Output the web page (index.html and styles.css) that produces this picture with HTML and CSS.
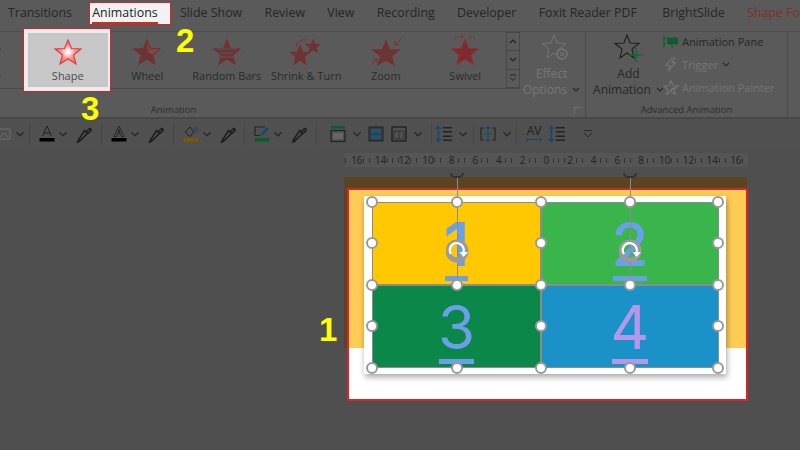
FILE: index.html
```html
<!DOCTYPE html>
<html lang="en">
<head>
    <meta charset="UTF-8">
    <title>Animations</title>
    <link rel="stylesheet" href="styles.css">
</head>
<body>
    <svg class="defs" width="0" height="0">
        <symbol id="star" viewBox="0 0 28 26"><polygon points="14,1 17.5,9.5 27,10 19.5,16 22,25 14,20 6,25 8.5,16 1,10 10.5,9.5"/></symbol>
        <symbol id="dropper" viewBox="0 0 16 16"><path d="M3 13.5 L2.5 15 L4 14.5 L11 7.5 L8.5 5 Z M8 4.5 L11.5 8 M10 6 L12.5 3.5 C13.5 2.5 15 4 14 5 L11.5 7.5" fill="none" stroke="#1c1c1c" stroke-width="1.4"/></symbol>
        <symbol id="caret" viewBox="0 0 8 5"><path d="M1 1 L4 4 L7 1" fill="none" stroke="#2a2a2a" stroke-width="1.1"/></symbol>
        <symbol id="lines" viewBox="0 0 16 16"><path d="M7 2.5H15M7 6H15M7 10H15M7 13.5H15" stroke="#222" stroke-width="1.3"/><path d="M3 1V15M1 3.5L3 1.2L5 3.5M1 12.5L3 14.8L5 12.5" fill="none" stroke="#144a70" stroke-width="1.4"/></symbol>
    </svg>

    <nav class="tabs">
        <span>Transitions</span>
        <span class="tab-active">Animations</span>
        <span>Slide Show</span>
        <span>Review</span>
        <span>View</span>
        <span>Recording</span>
        <span>Developer</span>
        <span class="tab-foxit">Foxit Reader PDF</span>
        <span>BrightSlide</span>
        <span class="tab-format">Shape Format</span>
    </nav>

    <section class="ribbon">
        <div class="group group-animation">
            <div class="group-body">
                <div class="gallery">
                    <div class="anim"><svg class="star dark"><use href="#star"/></svg><span>Fade</span></div>
                    <div class="anim anim-picked">
                        <svg class="star" viewBox="0 0 28 26">
                            <defs><radialGradient id="glow"><stop offset="0.1" stop-color="#fff"/><stop offset="0.55" stop-color="#ff8f8f"/><stop offset="1" stop-color="#f9686c"/></radialGradient></defs>
                            <polygon points="14,1 17.5,9.5 27,10 19.5,16 22,25 14,20 6,25 8.5,16 1,10 10.5,9.5" fill="url(#glow)" stroke="#d9403f" stroke-width="1.2"/>
                        </svg>
                        <span>Shape</span>
                    </div>
                    <div class="anim">
                        <svg class="star" viewBox="0 0 28 26"><polygon class="st" points="14,1 17.5,9.5 27,10 19.5,16 22,25 14,20 6,25 8.5,16 1,10 10.5,9.5"/><polygon points="14,13 17.5,9.5 27,10 19.5,16 14,13 14,1 17.5,9.5" fill="#7d4a4a"/></svg>
                        <span>Wheel</span>
                    </div>
                    <div class="anim">
                        <svg class="star" viewBox="0 0 28 26"><polygon class="st" points="14,1 17.5,9.5 27,10 19.5,16 22,25 14,20 6,25 8.5,16 1,10 10.5,9.5"/><path d="M4 10H24M8 14H20M7 18H21" stroke="#595959" stroke-width="1"/></svg>
                        <span>Random Bars</span>
                    </div>
                    <div class="anim">
                        <svg class="star star-wide" viewBox="0 0 34 28"><polygon class="st" points="11,8 13.5,14 20,14.5 15,18.5 17,26 11,22 5,26 7,18.5 2,14.5 8.5,14"/><polygon class="st" points="24,2 25.5,6 30.5,6.5 27,9.5 28.5,14 24,11.5 20,14 21,9.5 17.5,6.5 22.5,6"/><path d="M7 9C8 4 12 1 17 2" fill="none" stroke="#7c2d2d" stroke-width="1"/></svg>
                        <span>Shrink &amp; Turn</span>
                    </div>
                    <div class="anim">
                        <svg class="star star-wide" viewBox="0 0 34 28"><polygon class="st" transform="translate(3,2)" points="14,1 17.5,9.5 27,10 19.5,16 22,25 14,20 6,25 8.5,16 1,10 10.5,9.5"/><path d="M32 1L26 7M26 3V7H30M2 27L8 21M8 25V21H4" fill="none" stroke="#7c2d2d" stroke-width="1"/></svg>
                        <span>Zoom</span>
                    </div>
                    <div class="anim">
                        <svg class="star star-tall" viewBox="0 0 28 32"><polygon class="st swivel" transform="translate(0,6)" points="14,1 17.5,9.5 27,10 19.5,16 22,25 14,20 6,25 8.5,16 1,10 10.5,9.5"/><path d="M5 7C3 3 10 2 12 5M12 1L11 6M18 6C19 2 25 3 23 6" fill="none" stroke="#8c2f2f" stroke-width="1"/></svg>
                        <span>Swivel</span>
                    </div>
                    <div class="scroller">
                        <div class="scroll-btn"><svg viewBox="0 0 8 5"><path d="M1 4L4 1L7 4" fill="none" stroke="#222" stroke-width="1.1"/></svg></div>
                        <div class="scroll-btn"><svg viewBox="0 0 8 5"><path d="M1 1L4 4L7 1" fill="none" stroke="#222" stroke-width="1.1"/></svg></div>
                        <div class="scroll-btn"><svg class="scroll-more" viewBox="0 0 8 8"><path d="M1 1H7M1 3.5L4 6.5L7 3.5" fill="none" stroke="#222" stroke-width="1"/></svg></div>
                    </div>
                </div>
                <div class="big-btn big-btn-off">
                    <svg class="big-icon" viewBox="0 0 30 28"><polygon points="13,1 16,9 25,9.5 18,15 20,24 13,19 6,24 8,15 1,9.5 10,9" fill="#595959" stroke="#757575" stroke-width="1"/><circle cx="21" cy="20" r="5" fill="#595959" stroke="#757575" stroke-width="1.6"/><circle cx="21" cy="20" r="1.8" fill="none" stroke="#757575"/></svg>
                    <span>Effect</span>
                    <span>Options <svg class="caret-inline"><use href="#caret"/></svg></span>
                </div>
            </div>
            <div class="group-label label-animation">Animation<span class="launcher"></span></div>
        </div>
        <div class="group group-advanced">
            <div class="group-body">
                <div class="big-btn">
                    <svg class="big-icon" viewBox="0 0 30 28"><polygon points="13,1 16,9 25,9.5 18,15 20,24 13,19 6,24 8,15 1,9.5 10,9" fill="none" stroke="#1e1e1e" stroke-width="1.1"/><path d="M22 14V28M15 21H29" stroke="#0f6b3a" stroke-width="1.6"/></svg>
                    <span>Add</span>
                    <span>Animation <svg class="caret-inline"><use href="#caret"/></svg></span>
                </div>
                <ul class="side-list">
                    <li><svg class="side-icon" viewBox="0 0 16 14"><path d="M4 3H15V10H4Z" fill="#0f5c34"/><path d="M1 1V13M1 4H3M1 9H3M9 10V13" stroke="#0f5c34" stroke-width="1.2" fill="none"/></svg>Animation Pane</li>
                    <li class="side-off"><svg class="side-icon" viewBox="0 0 16 16"><path d="M9 1L3 9H7L5 15L13 6H9L12 1Z" fill="none" stroke="#757575" stroke-width="1.2"/></svg>Trigger <svg class="caret-inline"><use href="#caret"/></svg></li>
                    <li class="side-off"><svg class="side-icon" viewBox="0 0 28 26"><polygon points="14,1 17.5,9.5 27,10 19.5,16 22,25 14,20 6,25 8.5,16 1,10 10.5,9.5" fill="none" stroke="#757575" stroke-width="2"/><path d="M12 19L22 12" stroke="#757575" stroke-width="3"/></svg>Animation Painter</li>
                </ul>
            </div>
            <div class="group-label">Advanced Animation</div>
        </div>
        <div class="group group-rest"></div>
    </section>

    <section class="toolbar">
        <div class="tb-group tb-first">
            <svg class="tool" viewBox="0 0 18 18"><rect x="3" y="4" width="12" height="10" fill="none" stroke="#6e6e6e"/><path d="M5 12L9 8L13 12" fill="none" stroke="#6e6e6e"/></svg>
            <svg class="caret"><use href="#caret"/></svg>
        </div>
        <div class="tb-group">
            <svg class="tool" viewBox="0 0 18 18"><path d="M4.5 11L9 1L13.5 11M6 8H12" fill="none" stroke="#222" stroke-width="1"/><rect x="1.5" y="13" width="15" height="3.5" fill="#000"/></svg>
            <svg class="caret"><use href="#caret"/></svg>
            <svg class="tool tool-gap"><use href="#dropper"/></svg>
        </div>
        <div class="tb-group">
            <svg class="tool" viewBox="0 0 18 18"><path d="M4 11.5L9 1L14 11.5H11.5L10.5 9H7.5L6.5 11.5ZM8 7.5H10L9 4.5Z" fill="none" stroke="#222" stroke-width="0.9"/><rect x="1.5" y="13" width="15" height="3.5" fill="#000"/></svg>
            <svg class="caret"><use href="#caret"/></svg>
            <svg class="tool tool-gap"><use href="#dropper"/></svg>
        </div>
        <div class="tb-group">
            <svg class="tool" viewBox="0 0 18 18"><path d="M3 7L8 2L12 7L8 11.5Z" fill="none" stroke="#222" stroke-width="1"/><path d="M12 5C13 1.5 15 2 15 4.5M14 7.5L15 3.5" fill="none" stroke="#144a70" stroke-width="1.2"/><rect x="1.5" y="13" width="15" height="3.5" fill="#7a5a00"/></svg>
            <svg class="caret"><use href="#caret"/></svg>
            <svg class="tool tool-gap"><use href="#dropper"/></svg>
        </div>
        <div class="tb-group">
            <svg class="tool" viewBox="0 0 18 18"><path d="M12 2H2V10.5H7" fill="none" stroke="#222" stroke-width="1.1"/><path d="M7 11L8 8L14 2L16 4L10 10Z" fill="#144a70"/><rect x="1.5" y="13" width="15" height="3.5" fill="#0a5a2c"/></svg>
            <svg class="caret"><use href="#caret"/></svg>
            <svg class="tool tool-gap"><use href="#dropper"/></svg>
        </div>
        <div class="tb-group tb-arrange">
            <svg class="tool" viewBox="0 0 18 18"><rect x="2" y="1" width="14" height="2.5" fill="#0e5a30"/><rect x="2" y="5.5" width="14" height="11" fill="none" stroke="#222" stroke-width="1.2"/><rect x="4" y="8" width="10" height="6" fill="#666"/></svg>
            <svg class="caret"><use href="#caret"/></svg>
            <svg class="tool" viewBox="0 0 18 18"><rect x="2" y="2" width="14" height="14" fill="#3a3a3a" stroke="#222"/><rect x="4" y="4" width="10" height="4" fill="#1c5478"/><rect x="4" y="10" width="10" height="4" fill="#1c5478"/></svg>
            <svg class="tool" viewBox="0 0 18 18"><rect x="2" y="2" width="14" height="14" fill="none" stroke="#222" stroke-width="1.4"/><path d="M4 6H14M9 6V14M4 6V14H14V6" fill="none" stroke="#333"/></svg>
            <svg class="caret"><use href="#caret"/></svg>
        </div>
        <div class="tb-group tb-tight">
            <svg class="tool"><use href="#lines"/></svg>
            <svg class="caret"><use href="#caret"/></svg>
        </div>
        <div class="tb-group tb-align">
            <svg class="tool" viewBox="0 0 18 18"><path d="M5 3H2V15H5M13 3H16V15H13" fill="none" stroke="#222" stroke-width="1.1"/><path d="M9 1V17M7 3.5L9 1.5L11 3.5M7 14.5L9 16.5L11 14.5M5 9H13" fill="none" stroke="#144a70" stroke-width="1.2"/></svg>
            <svg class="caret"><use href="#caret"/></svg>
        </div>
        <div class="tb-group tb-last">
            <span class="tool tool-av">AV<svg viewBox="0 0 16 4"><path d="M0 2H16M2 0.5L0.3 2L2 3.5M14 0.5L15.7 2L14 3.5" fill="none" stroke="#144a70" stroke-width="1"/></svg></span>
            <svg class="tool"><use href="#lines"/></svg>
            <svg class="tool tool-more" viewBox="0 0 10 10"><path d="M1 1.5H9M1 4L5 8L9 4" fill="none" stroke="#2a2a2a" stroke-width="1"/></svg>
        </div>
    </section>

    <main class="workspace">
        <div class="ruler">
            <span>16</span><span>14</span><span>12</span><span>10</span><span>8</span><span>6</span><span>4</span><span>2</span><span>0</span><span>2</span><span>4</span><span>6</span><span>8</span><span>10</span><span>12</span><span>14</span><span>16</span>
        </div>
        <div class="stage">
            <div class="slide">
                <div class="slide-band"></div>
            </div>
            <div class="panel">
                <div class="tiles">
                    <div class="tile tile-yellow"><span class="num">1</span></div>
                    <div class="tile tile-green"><span class="num">2</span></div>
                    <div class="tile tile-dark"><span class="num">3</span></div>
                    <div class="tile tile-blue"><span class="num num-purple">4</span></div>

                    <i class="stem stem-a"></i><i class="stem stem-b"></i>
                    <i class="arc arc-a"></i><i class="arc arc-b"></i>

                    <i class="hd x1 y1"></i><i class="hd x2 y1"></i><i class="hd x3 y1"></i><i class="hd x4 y1"></i><i class="hd x5 y1"></i>
                    <i class="hd x1 y2"></i><i class="hd x3 y2"></i><i class="hd x5 y2"></i>
                    <i class="hd x1 y3"></i><i class="hd x2 y3"></i><i class="hd x3 y3"></i><i class="hd x4 y3"></i><i class="hd x5 y3"></i>
                    <i class="hd x1 y4"></i><i class="hd x3 y4"></i><i class="hd x5 y4"></i>
                    <i class="hd x1 y5"></i><i class="hd x2 y5"></i><i class="hd x3 y5"></i><i class="hd x4 y5"></i><i class="hd x5 y5"></i>

                    <svg class="rotate rotate-a" viewBox="0 0 26 24"><circle cx="11" cy="12" r="9" fill="none" stroke="#9a9a9a" stroke-width="5"/><path d="M5 15A7 7 0 1 1 17.5 13" fill="none" stroke="#fff" stroke-width="2.2"/><path d="M13.5 13H22L17.5 18Z" fill="#fff"/></svg>
                    <svg class="rotate rotate-b" viewBox="0 0 26 24"><circle cx="11" cy="12" r="9" fill="none" stroke="#9a9a9a" stroke-width="5"/><path d="M5 15A7 7 0 1 1 17.5 13" fill="none" stroke="#fff" stroke-width="2.2"/><path d="M13.5 13H22L17.5 18Z" fill="#fff"/></svg>
                </div>
            </div>
        </div>
    </main>

    <b class="mark mark-1">1</b>
    <b class="mark mark-2">2</b>
    <b class="mark mark-3">3</b>
</body>
</html>
```

FILE: styles.css
```css
* {
    box-sizing: border-box;
}

html, body {
    margin: 0;
    height: 450px;
    overflow: hidden;
}

body {
    position: relative;
    background: #4f4f4f;
    color: #262626;
    font-family: 'Open Sans', 'Noto Sans', sans-serif;
    font-size: 11px;
}

.defs {
    position: absolute;
}

/* tabs */
.tabs {
    display: flex;
    align-items: flex-start;
    gap: 22.3px;
    height: 31px;
    padding: 4px 0 0 8px;
    background: #5a5a5a;
    font-size: 12.4px;
    line-height: 17px;
    white-space: nowrap;
}

.tab-active {
    position: relative;
    margin-left: -2px;
    color: #222;
    z-index: 1;
}

.tab-active::before {
    content: "";
    position: absolute;
    top: -2px;
    left: -3px;
    right: -13px;
    bottom: -4px;
    z-index: -1;
    background: #f2f2f2;
    border: 1px solid #d8232e;
}

.tab-active::after {
    content: "";
    position: absolute;
    left: 0;
    right: 0;
    bottom: -3px;
    height: 2px;
    background: #b9361f;
}

.tab-foxit {
    margin-right: 3px;
}

.tab-format {
    color: #7d3326;
}

/* ribbon */
.ribbon {
    display: flex;
    height: 88px;
    background: #5a5a5a;
    border-bottom: 2px solid #484848;
    border-top: 1px solid #4e4e4e;
}

.group {
    display: flex;
    flex-direction: column;
    border-right: 1px solid #4a4a4a;
}

.group-animation {
    width: 586px;
}

.group-advanced {
    width: 202px;
}

.group-rest {
    flex: 1;
    border-right: 0;
}

.group-body {
    display: flex;
    height: 70px;
}

.group-label {
    position: relative;
    padding-top: 1px;
    text-align: center;
    font-size: 9.5px;
    line-height: 14px;
    color: #2c2c2c;
}

.label-animation {
    padding-right: 238px;
}

.launcher {
    position: absolute;
    right: 4px;
    top: 5px;
    width: 7px;
    height: 7px;
    border-left: 1px solid #6f6f6f;
    border-top: 1px solid #6f6f6f;
}

.gallery {
    display: flex;
    align-items: stretch;
    width: 571.5px;
    height: 57px;
    margin: 0 0 0 -51.5px;
    border-bottom: 1px solid #4a4a4a;
    flex: none;
}

.anim {
    position: relative;
    display: flex;
    flex-direction: column;
    align-items: center;
    width: 79.5px;
    height: 56px;
    padding-top: 7px;
    flex: none;
    font-size: 11px;
    line-height: 14px;
    color: #2a2a2a;
    white-space: nowrap;
}

.anim span {
    position: absolute;
    top: 37px;
}

.anim-picked {
    height: 54px;
    padding-top: 6px;
    background: #c7c7c7;
    z-index: 1;
    margin: 1px 0 0;
    color: #4a4a4a;
}

.anim-picked::before {
    content: "";
    position: absolute;
    top: -4px;
    left: -4px;
    right: -2px;
    bottom: -4px;
    border: 4px solid #ededed;
    border-right-width: 2px;
    outline: 1px solid #d8232e;
}

.anim-picked span {
    top: 36px;
}

.star {
    width: 28px;
    height: 26px;
    fill: #693535;
    stroke: #7c2d2d;
    overflow: visible;
}

.star-wide {
    width: 34px;
    height: 28px;
    margin-top: -1px;
}

.star-tall {
    width: 28px;
    height: 32px;
    margin-top: -6px;
}

.st {
    fill: #693535;
    stroke: #7c2d2d;
    stroke-width: 1.2;
}

.swivel {
    fill: #7d2b2e;
    stroke: #8c2f2f;
}

.scroller {
    display: flex;
    flex-direction: column;
    width: 14px;
    margin-left: auto;
}

.scroll-btn {
    display: flex;
    align-items: center;
    justify-content: center;
    flex: 1;
    border: 1px solid #474747;
}

.scroll-btn + .scroll-btn {
    border-top-width: 0;
}

.scroll-btn svg {
    width: 8px;
    height: 5px;
}

.scroll-btn .scroll-more {
    height: 8px;
}

.big-btn {
    display: flex;
    flex-direction: column;
    align-items: center;
    flex: 1;
    font-size: 12px;
    line-height: 16px;
    white-space: nowrap;
    color: #272727;
}

.big-icon {
    width: 30px;
    height: 28px;
    margin: 2px 0 4px;
}

.big-btn-off {
    padding-right: 2px;
    color: #777;
}

.big-btn-off .big-icon {
    margin-left: 8px;
}

.caret-inline {
    width: 8px;
    height: 5px;
    margin-left: 2px;
    vertical-align: 2px;
}

.group-advanced .big-btn {
    flex: none;
    width: 85px;
}

.side-list {
    margin: -2px 0 0 -8px;
    padding: 0;
    list-style: none;
    font-size: 11px;
    white-space: nowrap;
}

.side-list li {
    display: flex;
    align-items: center;
    height: 23px;
}

.side-off {
    color: #757575;
}

.side-off .caret-inline {
    margin-left: 4px;
    vertical-align: middle;
}

.side-icon {
    width: 16px;
    height: 15px;
    margin-right: 3px;
}

/* quick format row */
.toolbar {
    display: flex;
    align-items: center;
    height: 30px;
    margin-left: -43px;
    background: #505050;
}

.tb-group {
    display: flex;
    align-items: center;
    gap: 0;
    width: 71.75px;
    height: 22px;
    padding-left: 7px;
    border-left: 1px solid #474747;
    flex: none;
}

.tb-first {
    border-left: 0;
    width: 72px;
    padding-left: 37px;
}

.tool {
    width: 20px;
    height: 18px;
    flex: none;
}

.caret {
    width: 12px;
    height: 6px;
    flex: none;
}

.tool-gap {
    margin-left: 5px;
}

.tb-arrange {
    gap: 3px;
    width: 115px;
    padding-left: 11px;
}

.tb-tight {
    gap: 3px;
    width: 42px;
    padding-left: 2px;
}

.tb-align {
    gap: 3px;
    width: 43px;
    padding-left: 4px;
}

.tb-last {
    gap: 3px;
    width: 90px;
    padding-left: 7px;
    border-left: 1px solid #474747;
}

.tool-av {
    display: flex;
    flex-direction: column;
    align-items: center;
    font-size: 12px;
    line-height: 12px;
    color: #1f1f1f;
}

.tool-av svg {
    width: 16px;
    height: 5px;
}

.tool-more {
    width: 10px;
    height: 10px;
    margin-left: 13px;
}

/* slide area */
.workspace {
    padding-top: 4px;
}

.ruler {
    display: flex;
    width: 403px;
    height: 14px;
    margin-left: 345px;
    background: #555 repeating-linear-gradient(90deg, #333 0 1px, transparent 1px 5.93px) 0 50% / 100% 5px no-repeat;
    font-size: 10px;
    line-height: 14px;
    color: #222;
}

.ruler span {
    width: 23.7px;
    text-align: center;
    flex: none;
    background: linear-gradient(#555, #555) center / 11px 100% no-repeat;
}

.stage {
    position: relative;
    width: 403px;
    height: 224px;
    margin: 10px 0 0 344px;
    background: linear-gradient(#5a4520, #5a4520) 0 0 / 100% 12px no-repeat,
                linear-gradient(#5a4520, #5a4520) 0 0 / 4px 171px no-repeat;
}

.slide {
    position: absolute;
    left: 3px;
    top: 11px;
    width: 401px;
    height: 213px;
    background: #fff;
    border: 2px solid #d8232e;
}

.slide-band {
    height: 158px;
    background: #ffcd55;
}

.panel {
    position: absolute;
    left: 20px;
    top: 19px;
    width: 362px;
    height: 178px;
    padding: 6px 7px 6px 8px;
    background: #fff;
    box-shadow: 1px 3px 6px rgba(0, 0, 0, 0.35);
}

.tiles {
    position: relative;
    display: grid;
    grid-template-columns: 169px 178px;
    grid-template-rows: 83px 83px;
    height: 166px;
}

.tile {
    display: flex;
    justify-content: center;
    border: 1px solid #8c8c8c;
}

.tile-yellow { background: #ffc800; }
.tile-green { background: #3ab54c; }
.tile-dark { background: #0b8749; }
.tile-blue { background: #1a92c8; }

.num {
    height: 73px;
    margin-top: 5px;
    border-bottom: 5px solid #6aa0ea;
    font-family: Inter, sans-serif;
    font-size: 60px;
    line-height: 72px;
    letter-spacing: -1.5px;
    text-indent: -1.5px;
    color: #6aa0ea;
}

.tile-yellow .num {
    font-weight: 600;
}

.tile-green .num {
    font-weight: 500;
}

.num-purple {
    border-color: #b497e8;
    color: #b497e8;
}

.stem {
    position: absolute;
    width: 1px;
    background: #8c8c8c;
}

.stem-a { left: 85px; top: -25px; height: 110px; }
.stem-b { left: 258px; top: -25px; height: 110px; }

.arc {
    position: absolute;
    top: -29px;
    width: 14px;
    height: 5px;
    border: 2px solid #333;
    border-top: 0;
    border-radius: 0 0 8px 8px;
}

.arc-a { left: 78px; }
.arc-b { left: 251px; }

.hd {
    position: absolute;
    width: 12px;
    height: 12px;
    margin: -6px 0 0 -6px;
    background: #fff;
    border: 2.5px solid #9a9a9a;
    border-radius: 50%;
}

.x1 { left: 0; }
.x2 { left: 85px; }
.x3 { left: 169px; }
.x4 { left: 258px; }
.x5 { left: 346px; }
.y1 { top: 0; }
.y2 { top: 41px; }
.y3 { top: 83px; }
.y4 { top: 124px; }
.y5 { top: 166px; }

.rotate {
    position: absolute;
    top: 37px;
    width: 26px;
    height: 24px;
}

.rotate-a { left: 74px; }
.rotate-b { left: 247px; }

/* yellow numbers on the screenshot */
.mark {
    position: absolute;
    font-family: 'Liberation Sans', sans-serif;
    font-size: 33px;
    line-height: 36px;
    color: #ffff00;
}

.mark-1 { left: 319px; top: 312px; }
.mark-2 { left: 176px; top: 23px; }
.mark-3 { left: 81px; top: 91px; }
```
